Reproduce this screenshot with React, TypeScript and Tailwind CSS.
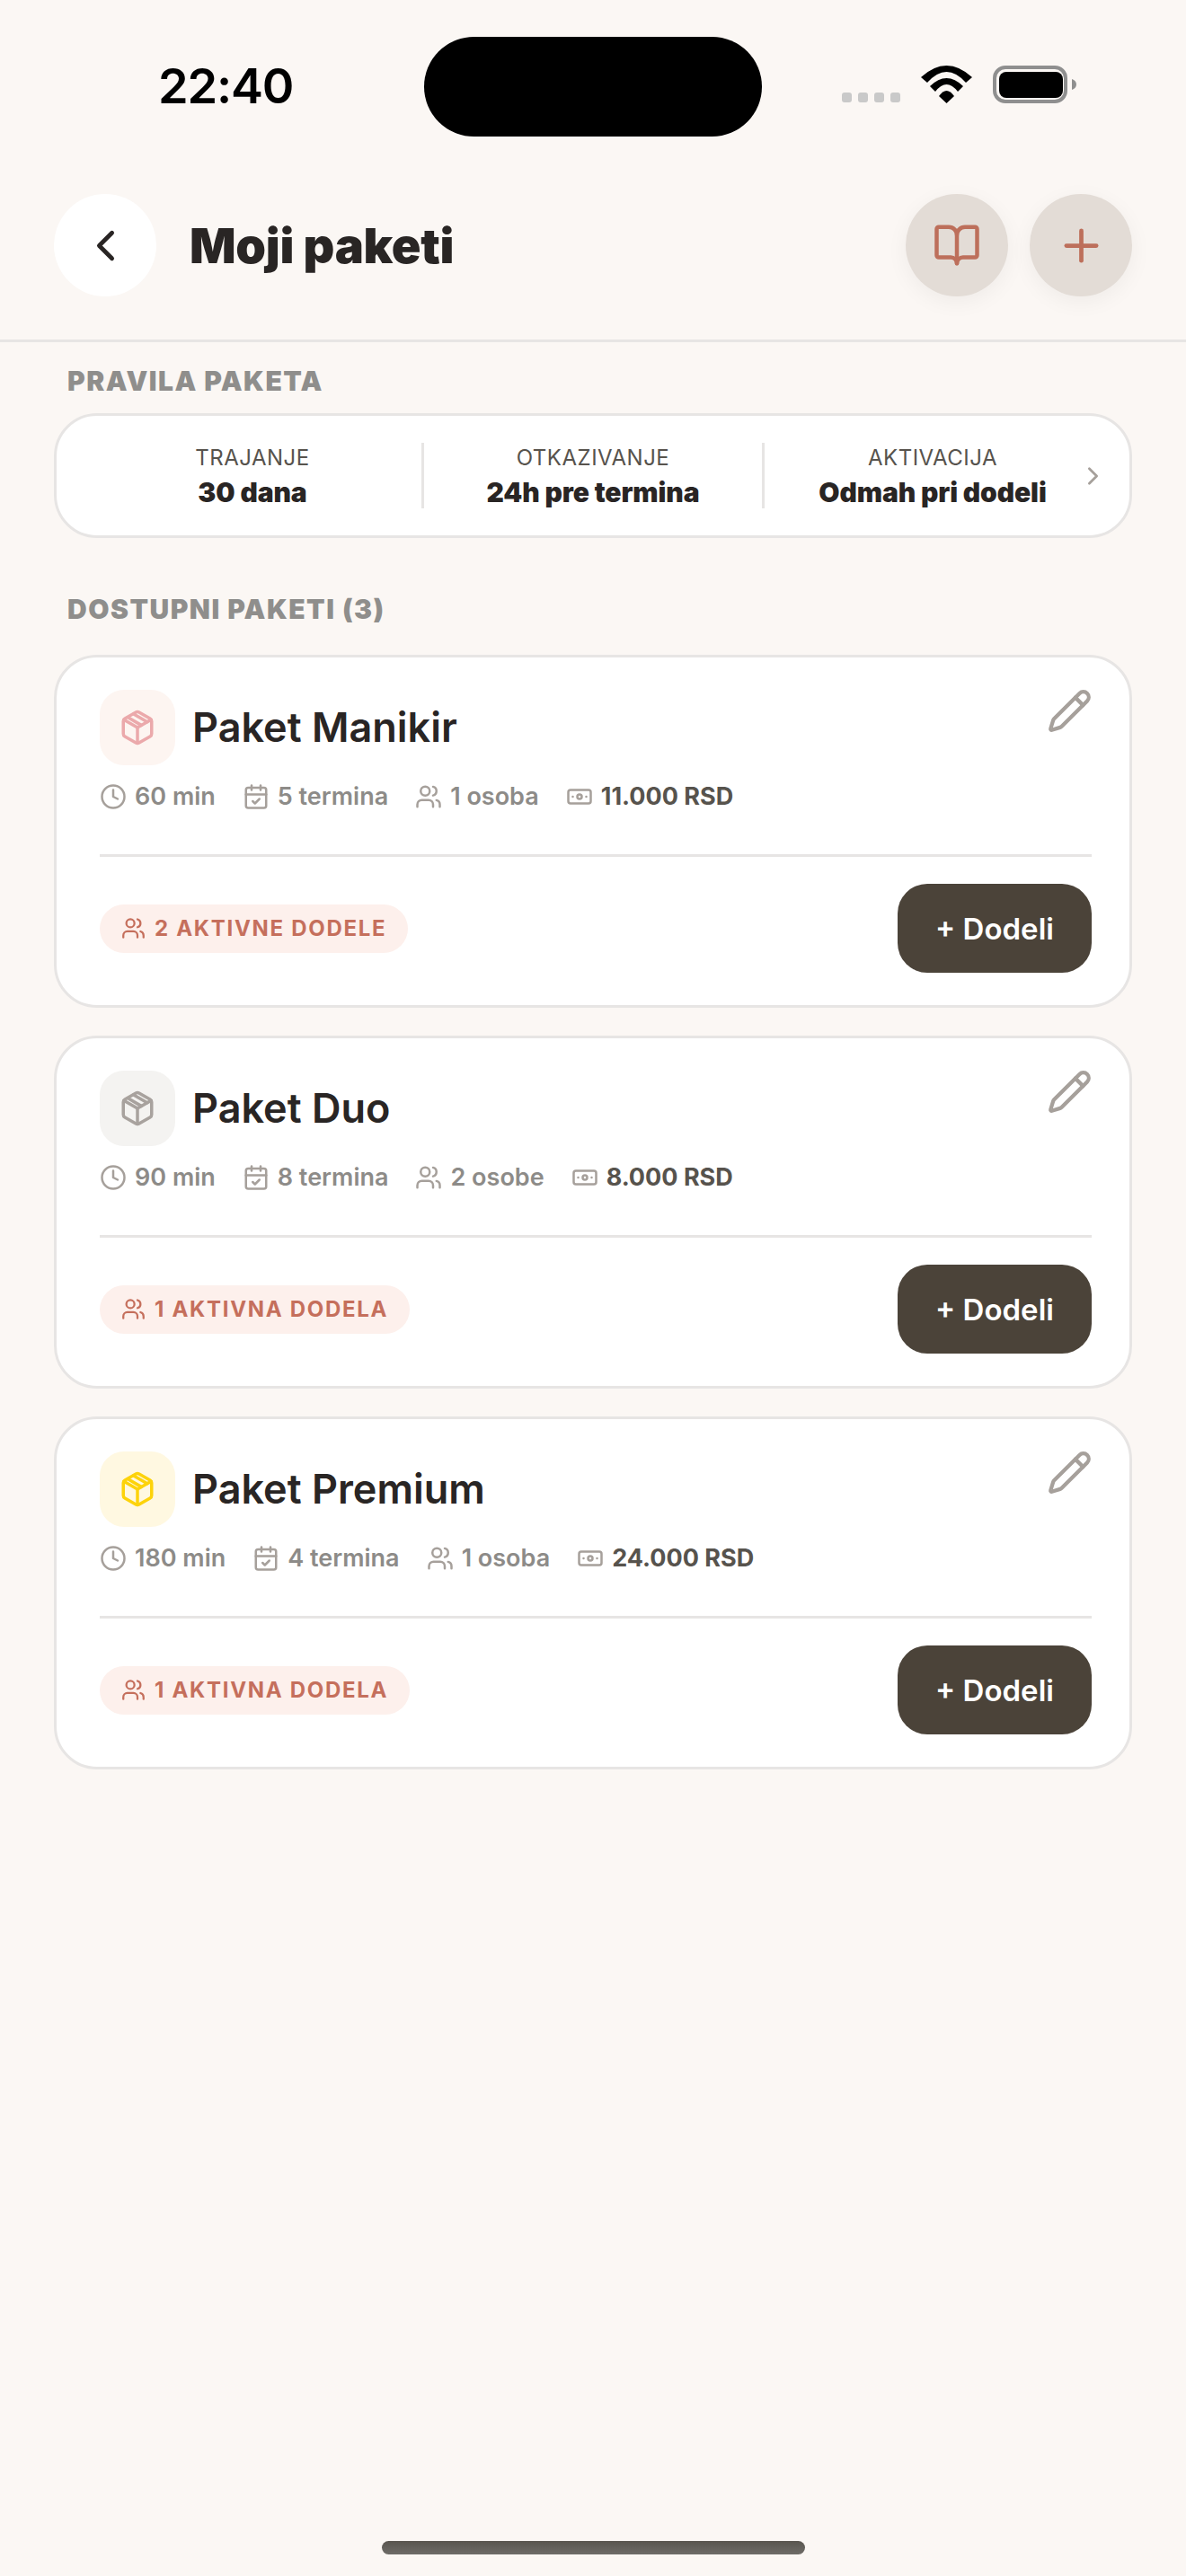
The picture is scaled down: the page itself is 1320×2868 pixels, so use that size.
import React from 'react';
import { BookOpen, CalendarCheck, Banknote, ChevronLeft, ChevronRight, Clock, Pencil, Plus, Users } from 'lucide-react';

interface BoxIconProps {
  className: string;
}

// Box with a strap over the lid, not the same as lucide's Package
const BoxIcon: React.FC<BoxIconProps> = ({ className }) => (
  <svg viewBox="0 0 24 24" className={className} fill="none" stroke="currentColor" strokeWidth="2" strokeLinecap="round" strokeLinejoin="round">
    <path d="M11 21.73a2 2 0 0 0 2 0l7-4A2 2 0 0 0 21 16V8a2 2 0 0 0-1-1.73l-7-4a2 2 0 0 0-2 0l-7 4A2 2 0 0 0 3 8v8a2 2 0 0 0 1 1.73z" />
    <path d="M3.3 7 12 12l8.7-5" />
    <path d="M12 22V12" />
    <path d="m9.6 3.4 8.6 5" />
    <path d="m6 5.6 8.4 4.9" />
  </svg>
);

const WifiIcon = () => (
  <svg width="57" height="42" viewBox="0 0 57 42" fill="#000">
    <path d="M0 13Q28.5-13 57 13L50 19Q28.5-5 7 19Z" />
    <path d="M10 23Q28.5 5 47 23L41 29Q28.5 13 16 29Z" />
    <path d="M20 34Q28.5 22 37 34L28.5 42Z" />
  </svg>
);

const BatteryIcon = () => (
  <svg width="93" height="42" viewBox="0 0 93 42">
    <rect x="2" y="2" width="79" height="38" rx="12" fill="none" stroke="#8f8f8f" strokeWidth="4" />
    <rect x="7" y="7" width="71" height="29" rx="8" fill="#000" />
    <path d="M88 15c3 1 5 3 5 6s-2 5-5 6z" fill="#8f8f8f" />
  </svg>
);

const StatusBar = () => (
  <div className="h-[216px] pt-[41px] pl-[176px] pr-[122px] flex items-start">
    <span className="w-[296px] mt-[15px] text-[54px] leading-[80px] h-[80px] font-semibold tracking-[-1.2px] text-black">22:40</span>
    <div className="w-[376px] h-[111px] rounded-full bg-black" />
    <div className="ml-[89px] mt-[32px] flex items-end">
      <div className="flex gap-[7px] mb-[1px]">
        {[0, 1, 2, 3].map((i) => (
          <span key={i} className="w-[11px] h-[11px] rounded-[3px] bg-[#c9c9c9]" />
        ))}
      </div>
      <div className="ml-[23px]"><WifiIcon /></div>
      <div className="ml-[23px]"><BatteryIcon /></div>
    </div>
  </div>
);

const rules = [
  { label: 'TRAJANJE', value: '30 dana', cls: 'w-[379px] border-r-[3px] border-stone-200' },
  { label: 'OTKAZIVANJE', value: '24h pre termina', cls: 'w-[379px] border-r-[3px] border-stone-200' },
  { label: 'AKTIVACIJA', value: 'Odmah pri dodeli', cls: 'w-[374px]' },
];

const packages = [
  {
    name: 'Paket Manikir',
    boxBg: 'bg-[#fdf5f1]',
    boxColor: 'text-[#eba9ab]',
    minutes: '60 min',
    sessions: '5 termina',
    people: '1 osoba',
    price: '11.000 RSD',
    assigned: '2 AKTIVNE DODELE',
  },
  {
    name: 'Paket Duo',
    boxBg: 'bg-[#f4f3f1]',
    boxColor: 'text-[#a8a29e]',
    minutes: '90 min',
    sessions: '8 termina',
    people: '2 osobe',
    price: '8.000 RSD',
    assigned: '1 AKTIVNA DODELA',
  },
  {
    name: 'Paket Premium',
    boxBg: 'bg-[#fff8e1]',
    boxColor: 'text-[#fdd30b]',
    minutes: '180 min',
    sessions: '4 termina',
    people: '1 osoba',
    price: '24.000 RSD',
    assigned: '1 AKTIVNA DODELA',
  },
];

type Pkg = (typeof packages)[number];

const PackageCard: React.FC<{ pkg: Pkg }> = ({ pkg }) => (
  <div className="h-[393px] rounded-[48px] border-[3px] border-stone-200 bg-white pt-[36px] pl-[48px] pr-[42px]">
    <div className="flex items-start">
      <div className={`w-[84px] h-[84px] rounded-[27px] flex items-center justify-center ${pkg.boxBg}`}>
        <BoxIcon className={`w-[42px] h-[42px] ${pkg.boxColor}`} />
      </div>
      <h3 className="ml-[19px] h-[84px] leading-[84px] text-[45px] font-semibold text-stone-800">{pkg.name}</h3>
      <Pencil className="ml-auto -mt-[2px] -mr-[1px] w-[51px] h-[51px] text-stone-400" strokeWidth={2} />
    </div>

    <div className="mt-[20px] h-[30px] flex items-center gap-[30px] text-[27px] font-semibold text-[#8d8b88]">
      <span className="flex items-center gap-[9px]">
        <Clock className="w-[30px] h-[30px] text-stone-400" />
        {pkg.minutes}
      </span>
      <span className="flex items-center gap-[9px]">
        <CalendarCheck className="w-[30px] h-[30px] text-stone-400" />
        {pkg.sessions}
      </span>
      <span className="flex items-center gap-[9px]">
        <Users className="w-[30px] h-[30px] text-stone-400" />
        {pkg.people}
      </span>
      <span className="flex items-center gap-[9px] font-bold text-stone-600">
        <Banknote className="w-[30px] h-[30px] text-stone-400" />
        {pkg.price}
      </span>
    </div>

    <div className="mt-[49px] h-[3px] bg-stone-200" />

    <div className="mt-[30px] flex items-center justify-between">
      <span className="h-[54px] px-[24px] rounded-full bg-[#fdf0ec] flex items-center gap-[10px] text-[24px] font-bold tracking-[1.7px] text-[#c56f5c]">
        <Users className="w-[27px] h-[27px]" />
        {pkg.assigned}
      </span>
      <button className="w-[216px] h-[99px] pt-[2px] rounded-[33px] bg-[#4b4339] text-white text-[33px] font-semibold">
        + Dodeli
      </button>
    </div>
  </div>
);

export default function App() {
  return (
    <div className="w-[1320px] h-[2868px] bg-[#fbf7f4] flex flex-col font-['Inter',sans-serif]">
      <StatusBar />

      <header className="h-[165px] px-[60px] pb-[48px] border-b-[3px] border-stone-200 flex items-center">
        <button className="w-[114px] h-[114px] rounded-full bg-white flex items-center justify-center">
          <ChevronLeft className="w-[57px] h-[57px] text-stone-800" />
        </button>
        <h1 className="ml-[37px] text-[54px] font-black tracking-[-0.3px] text-stone-800">Moji paketi</h1>
        <div className="ml-auto flex gap-[24px]">
          <button className="w-[114px] h-[114px] rounded-full bg-[#e3dcd6] shadow-[0_6px_24px_rgba(0,0,0,0.05)] flex items-center justify-center">
            <BookOpen className="w-[54px] h-[54px] text-[#bd6f5b]" />
          </button>
          <button className="w-[114px] h-[114px] rounded-full bg-[#e3dcd6] shadow-[0_6px_24px_rgba(0,0,0,0.05)] flex items-center justify-center">
            <Plus className="w-[57px] h-[57px] text-[#bd6f5b]" />
          </button>
        </div>
      </header>

      <main className="px-[60px] pt-[25px]">
        <h2 className="ml-[15px] text-[30px] leading-[36px] font-black tracking-[1.5px] text-[#8f8e8c]">PRAVILA PAKETA</h2>

        <div className="relative mt-[18px] h-[139px] rounded-[48px] border-[3px] border-stone-200 bg-white pl-[30px] flex items-center">
          {rules.map((rule) => (
            <div key={rule.label} className={`h-[73px] flex flex-col items-center justify-center ${rule.cls}`}>
              <span className="text-[24px] leading-[36px] tracking-[0.5px] text-stone-600">{rule.label}</span>
              <span className="mt-[1px] text-[30px] leading-[39px] font-black tracking-[-0.1px] text-stone-800">{rule.value}</span>
            </div>
          ))}
          <ChevronRight className="absolute right-[24px] top-1/2 -translate-y-1/2 w-[33px] h-[33px] text-stone-400" />
        </div>

        <h2 className="mt-[61px] ml-[15px] text-[30px] leading-[36px] font-black tracking-[1.5px] text-[#8f8e8c]">DOSTUPNI PAKETI (3)</h2>

        <div className="mt-[33px] flex flex-col gap-[31px]">
          {packages.map((pkg) => (
            <PackageCard key={pkg.name} pkg={pkg} />
          ))}
        </div>
      </main>

      <div className="mt-auto mb-[24px] mx-auto w-[471px] h-[15px] rounded-full bg-gradient-to-b from-[#59554f] to-[#6e6c68]" />
    </div>
  );
}
